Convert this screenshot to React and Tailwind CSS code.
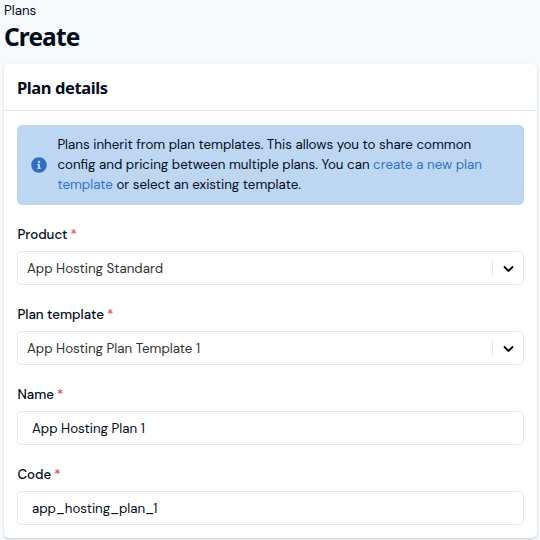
import React, { useState } from 'react';
import { FaInfoCircle } from 'react-icons/fa';

const ChevronIcon = () => (
  <svg width="17" height="17" viewBox="0 0 20 20" fill="currentColor" aria-hidden="true">
    <path d="M4.516 7.548c0.436-0.446 1.043-0.481 1.576 0l3.908 3.747 3.908-3.747c0.533-0.481 1.141-0.446 1.574 0 0.436 0.445 0.408 1.197 0 1.615-0.406 0.418-4.695 4.502-4.695 4.502-0.217 0.223-0.502 0.335-0.787 0.335s-0.57-0.112-0.789-0.335c0 0-4.287-4.084-4.695-4.502s-0.436-1.17 0-1.615z" />
  </svg>
);

const Field = ({ label, children }) => (
  <div>
    <div className="h-5 mb-1.5 pl-[0.4px] leading-5 font-medium whitespace-nowrap">
      <span>{label}</span>
      <span className="ml-[3px] font-normal text-[#e5383f]">*</span>
    </div>
    {children}
  </div>
);

const SelectBox = ({ value }) => (
  <button type="button" className="flex items-center w-full h-[34px] border border-[#e2e8f0] rounded-[5px] bg-white text-left">
    <span className="flex-1 pl-[9px] pt-px text-[#333333]">{value}</span>
    <span className="w-px h-[18px] bg-[#e2e8f0]" />
    <span className="flex items-center justify-center w-[30px] text-black">
      <ChevronIcon />
    </span>
  </button>
);

const inputClass = 'block w-full h-[34px] border border-[#e2e8f0] rounded-[5px] bg-white px-3.5 outline-none';

const App = () => {
  const [name, setName] = useState('App Hosting Plan 1');
  const [code, setCode] = useState('app_hosting_plan_1');

  return (
    <div className="h-[540px] overflow-hidden bg-[#f6fafd] pl-1 pr-[3px] text-[13.33px] text-[#020c1b] font-['DM_Sans','Inter',sans-serif]">
      <div className="h-5 leading-[21px]">Plans</div>
      <h1 className="h-[44px] leading-[34px] text-[24.5px] font-bold tracking-[-0.9px] font-['Noto_Sans',sans-serif]">Create</h1>

      <div className="h-[474px] bg-white rounded-[5px] shadow-[0_1px_3px_rgba(0,0,0,0.1),0_1px_2px_rgba(0,0,0,0.1)]">
        <div className="flex items-center h-[47px] px-[13px] pt-0.5 border-b border-[#e2e8f0]">
          <h2 className="text-[16.5px] font-bold tracking-[-0.4px] font-['Noto_Sans',sans-serif]">Plan details</h2>
        </div>

        <div className="px-[13px] pt-3.5">
          <div className="flex items-center h-20 pl-3.5 rounded-[5px] bg-[#bdd7f3]">
            <FaInfoCircle size={16} className="shrink-0 text-[#2f6dc4]" />
            <p className="ml-[10.4px] leading-5 whitespace-nowrap">
              Plans inherit from plan templates. This allows you to share common
              <br />
              config and pricing between multiple plans. You can <a className="text-[#3172cd]">create a new plan</a>
              <br />
              <a className="text-[#3172cd]">template</a> or select an existing template.
            </p>
          </div>

          <div className="flex flex-col gap-5 pt-5">
            <Field label="Product">
              <SelectBox value="App Hosting Standard" />
            </Field>
            <Field label="Plan template">
              <SelectBox value="App Hosting Plan Template 1" />
            </Field>
            <Field label="Name">
              <input className={inputClass} value={name} onChange={(e) => setName(e.target.value)} />
            </Field>
            <Field label="Code">
              <input className={inputClass} value={code} onChange={(e) => setCode(e.target.value)} />
            </Field>
          </div>
        </div>
      </div>
    </div>
  );
};

export default App;
